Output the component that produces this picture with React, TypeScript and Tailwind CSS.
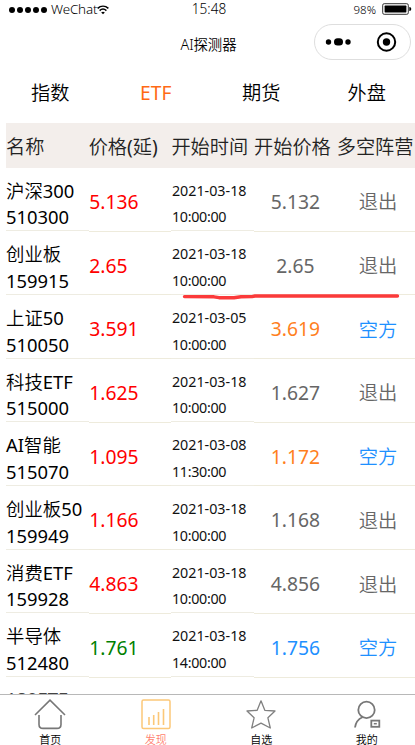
import React from 'react';

type Row = {
  name: string;
  code: string;
  price: string;
  date: string;
  time: string;
  start: string;
  side: string;
  priceColor?: string;
  startColor?: string;
};

const ORANGE = 'text-[#ff7f1e]';
const BLUE = 'text-[#1e90ff]';

const rows: Row[] = [
  { name: '沪深300', code: '510300', price: '5.136', date: '2021-03-18', time: '10:00:00', start: '5.132', side: '退出' },
  { name: '创业板', code: '159915', price: '2.65', date: '2021-03-18', time: '10:00:00', start: '2.65', side: '退出' },
  { name: '上证50', code: '510050', price: '3.591', date: '2021-03-05', time: '10:00:00', start: '3.619', side: '空方', startColor: ORANGE },
  { name: '科技ETF', code: '515000', price: '1.625', date: '2021-03-18', time: '10:00:00', start: '1.627', side: '退出' },
  { name: 'AI智能', code: '515070', price: '1.095', date: '2021-03-08', time: '11:30:00', start: '1.172', side: '空方', startColor: ORANGE },
  { name: '创业板50', code: '159949', price: '1.166', date: '2021-03-18', time: '10:00:00', start: '1.168', side: '退出' },
  { name: '消费ETF', code: '159928', price: '4.863', date: '2021-03-18', time: '10:00:00', start: '4.856', side: '退出' },
  { name: '半导体', code: '512480', price: '1.761', date: '2021-03-18', time: '14:00:00', start: '1.756', side: '空方', priceColor: 'text-[#008000]', startColor: BLUE },
];

const StatusBar = () => (
  <div className="grid h-[19px] grid-cols-3 items-center pl-[9px] pr-[3px] font-light text-black">
    <div className="flex items-center">
      <div className="flex gap-[2px]">
        {[0, 1, 2, 3, 4].map((i) => (
          <span key={i} className="size-[6px] rounded-full bg-black" />
        ))}
      </div>
      <span className="-mt-px ml-[4px] text-[13.4px] leading-[18px] tracking-[-0.15px]">WeChat</span>
      <svg width="12" height="10" viewBox="0 0 12 10" fill="none" stroke="#000" strokeWidth="1.5">
        <path d="M0.6 3.4C3.8 0.4 8.2 0.4 11.4 3.4" />
        <path d="M2.6 5.6C4.7 3.7 7.3 3.7 9.4 5.6" />
        <path d="M4.2 7.4C5.3 6.5 6.7 6.5 7.8 7.4L6 9.3Z" fill="#000" stroke="none" />
      </svg>
    </div>
    <div className="-mt-[2px] pr-[3px] text-center text-[13.6px] leading-[18px]">15:48</div>
    <div className="flex items-center justify-end">
      <span className="text-[11.5px] leading-[18px]">98%</span>
      <svg className="-mt-px ml-[6px]" width="30" height="12" viewBox="0 0 30 12">
        <rect x="0.7" y="0.7" width="25.6" height="10.6" rx="1.5" fill="#fff" stroke="#333" strokeWidth="1" />
        <rect x="2.6" y="2.6" width="21.8" height="6.8" rx="0.6" fill="#000" />
        <path d="M27.3 4Q29.3 4.2 29.3 6T27.3 8Z" fill="#000" />
      </svg>
    </div>
  </div>
);

const TitleBar = () => (
  <div className="relative flex h-[48px] items-center justify-center">
    <h1 className="mt-[3px] pl-[2px] text-[14.4px] font-light leading-5 tracking-[-0.1px] text-black">AI探测器</h1>
    <div className="absolute right-[4px] top-[5px] flex h-[36px] w-[97px] items-center rounded-full border border-[#dedede] bg-white">
      <svg width="95" height="34" viewBox="0 0 95 34">
        <circle cx="13.5" cy="17" r="2.7" />
        <rect x="19" y="13.2" width="9" height="7.4" rx="3.6" />
        <circle cx="33" cy="17" r="2.7" />
        <circle cx="71.5" cy="17" r="8.7" fill="none" stroke="#000" strokeWidth="2" />
        <circle cx="71.5" cy="17" r="3.7" />
      </svg>
    </div>
  </div>
);

const Tabs = () => (
  <div className="flex h-[56px] w-[422px] items-center pb-[4px] text-[19.2px]">
    {['指数', 'ETF', '期货', '外盘'].map((tab) => (
      <div key={tab} className={`w-1/4 pr-[5px] text-center leading-[30px] ${tab === 'ETF' ? 'text-[#ff6a14]' : 'text-black'}`}>
        {tab}
      </div>
    ))}
  </div>
);

const Quote = ({ row }: { row: Row }) => (
  <div className="grid h-[63.7px] grid-cols-[repeat(5,82.7px)] text-[19.3px]">
    <div className="h-[63.2px] border-b border-[#eeece2] pt-[9.5px] text-[18.4px] leading-[26.7px] text-black">
      <div>{row.name}</div>
      <div>{row.code}</div>
    </div>
    <div className={`flex items-center border-b border-[#eeebdc] pl-[0.5px] pt-[6px] ${row.priceColor ?? 'text-[#ff0000]'}`}>{row.price}</div>
    <div className="h-[63.2px] border-b border-[#eeece2] pl-[0.5px] pt-[9.5px] text-[14.3px] leading-[26.7px] text-[#111]">
      <div>{row.date}</div>
      <div className="tracking-[-0.3px]">{row.time}</div>
    </div>
    <div className={`flex items-center justify-center border-b border-[#eeebdc] pt-[6px] ${row.startColor ?? 'text-[#666]'}`}>{row.start}</div>
    <div className={`flex items-center justify-center border-b border-[#eeebdc] pt-[7px] ${row.side === '空方' ? BLUE : 'text-[#666]'}`}>{row.side}</div>
  </div>
);

const HomeIcon = () => (
  <svg width="32" height="31" viewBox="0 0 32 31" fill="none" stroke="#777" strokeWidth="1.6">
    <path d="M1 16L16 1.2L31 16" />
    <path d="M5 16V25.5Q5 29.4 9 29.4H23Q27 29.4 27 25.5V16" />
  </svg>
);

const ChartIcon = () => (
  <svg width="30" height="31" viewBox="0 0 30 31" fill="none" stroke="#fcc878" strokeWidth="1.5">
    <rect x="1" y="1" width="28" height="28.5" rx="1.5" />
    <path d="M8 18V26M12.7 16V26M17.5 13V26M22.5 10V26" strokeWidth="1.6" />
  </svg>
);

const StarIcon = () => (
  <svg width="30" height="31" viewBox="0 0 30 31" fill="none" stroke="#808080" strokeWidth="1.3" strokeLinejoin="round">
    <path d="M15 1.8L18.8 11.3L29 12L21.9 18.8L24.3 29L15 24.2L5.7 29L8.1 18.8L1 12L11.2 11.3Z" />
  </svg>
);

const UserIcon = () => (
  <svg width="28" height="31" viewBox="0 0 28 31" fill="none" stroke="#777" strokeWidth="1.8">
    <circle cx="13.5" cy="10.9" r="8.2" />
    <path d="M9.4 18.2Q3 21 2 28.5" />
    <rect x="18.3" y="21.6" width="8" height="6.2" />
    <path d="M20.8 24.7H23.8" strokeWidth="1.5" />
  </svg>
);

const navItems = [
  { label: '首页', icon: <HomeIcon /> },
  { label: '发现', icon: <ChartIcon />, active: true },
  { label: '自选', icon: <StarIcon /> },
  { label: '我的', icon: <UserIcon /> },
];

const BottomNav = () => (
  <nav className="h-[51px] border-t border-[#b8b8b8] bg-white">
    <div className="flex w-[422px]">
      {navItems.map((item) => (
        <div key={item.label} className="flex w-1/4 flex-col items-center pr-[5px] pt-[4px]">
          {item.icon}
          <span className={`mt-[2px] text-[11px] leading-[16px] ${item.active ? 'text-[#ff7f6e]' : 'text-black'}`}>{item.label}</span>
        </div>
      ))}
    </div>
  </nav>
);

const App = () => (
  <div className="flex h-[745px] w-[415px] flex-col overflow-hidden bg-white font-['Noto_Sans','Noto_Sans_CJK_SC_DemiLight','Noto_Sans_CJK_SC',sans-serif] font-normal">
    <StatusBar />
    <TitleBar />
    <Tabs />
    <main className="relative min-h-0 flex-1 overflow-hidden pl-[6px]">
      <div className="grid h-[45px] w-[413.5px] grid-cols-[repeat(5,82.7px)] items-center whitespace-nowrap bg-[#f3eeeb] pt-[3px] text-[19.2px] text-[#222]">
        <div>名称</div>
        <div>价格(延)</div>
        <div>开始时间</div>
        <div>开始价格</div>
        <div>多空阵营</div>
      </div>
      {rows.map((row) => (
        <Quote key={row.code} row={row} />
      ))}
      {/* next quote, only its top edge shows above the tab bar */}
      <div className="pt-[8px] text-[18.4px] leading-[26.7px] text-[#444]">180ETF</div>
      {/* hand-drawn marker under the second quote */}
      <svg className="absolute left-[180px] top-[168px]" width="222" height="12" viewBox="0 0 222 12" fill="none">
        <path d="M4.5 5.6L34 5.8L39 6.7H54L61 5.8L72 5.6L75 5H217.5" stroke="#fb3a3a" strokeWidth="3.4" strokeLinecap="round" strokeLinejoin="round" />
      </svg>
    </main>
    <BottomNav />
  </div>
);

export default App;
